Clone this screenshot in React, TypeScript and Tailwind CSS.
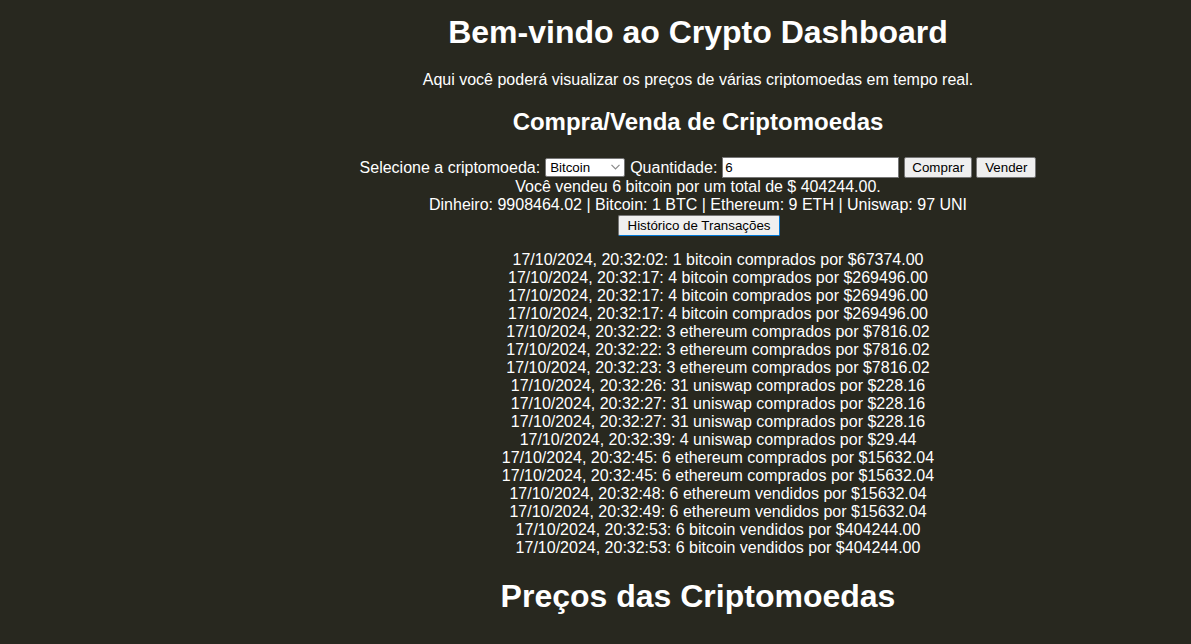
import { useState } from 'react';

const historico = [
  '17/10/2024, 20:32:02: 1 bitcoin comprados por $67374.00',
  '17/10/2024, 20:32:17: 4 bitcoin comprados por $269496.00',
  '17/10/2024, 20:32:17: 4 bitcoin comprados por $269496.00',
  '17/10/2024, 20:32:17: 4 bitcoin comprados por $269496.00',
  '17/10/2024, 20:32:22: 3 ethereum comprados por $7816.02',
  '17/10/2024, 20:32:22: 3 ethereum comprados por $7816.02',
  '17/10/2024, 20:32:23: 3 ethereum comprados por $7816.02',
  '17/10/2024, 20:32:26: 31 uniswap comprados por $228.16',
  '17/10/2024, 20:32:27: 31 uniswap comprados por $228.16',
  '17/10/2024, 20:32:27: 31 uniswap comprados por $228.16',
  '17/10/2024, 20:32:39: 4 uniswap comprados por $29.44',
  '17/10/2024, 20:32:45: 6 ethereum comprados por $15632.04',
  '17/10/2024, 20:32:45: 6 ethereum comprados por $15632.04',
  '17/10/2024, 20:32:48: 6 ethereum vendidos por $15632.04',
  '17/10/2024, 20:32:49: 6 ethereum vendidos por $15632.04',
  '17/10/2024, 20:32:53: 6 bitcoin vendidos por $404244.00',
  '17/10/2024, 20:32:53: 6 bitcoin vendidos por $404244.00',
];

export default function App() {
  const [moeda, setMoeda] = useState('bitcoin');
  const [qtd, setQtd] = useState('6');

  return (
    <div className="min-h-[644px] bg-[#28281f] text-white font-['Liberation_Sans',Arial,sans-serif] flex">
      {/* espaço lateral */}
      <div className="w-[205px] shrink-0" />

      <main className="flex-1 text-center">
        <h1 className="text-[32px] leading-[37px] font-bold mt-[14px]">Bem-vindo ao Crypto Dashboard</h1>
        <p className="text-base leading-[18px] mt-[20px]">
          Aqui você poderá visualizar os preços de várias criptomoedas em tempo real.
        </p>

        <h2 className="text-2xl leading-[27px] font-bold mt-[19px]">Compra/Venda de Criptomoedas</h2>

        <div className="mt-[22px] flex items-center justify-center text-base leading-[18px]">
          <label>Selecione a criptomoeda:</label>
          <div className="relative ml-[5px]">
            <select
              value={moeda}
              onChange={(e) => setMoeda(e.target.value)}
              className="appearance-none block w-[80px] h-[19px] bg-white text-black text-[13.33px] leading-[17px] border border-[#767676] rounded-[2px] pl-[4px] text-left"
            >
              <option value="bitcoin">Bitcoin</option>
              <option value="ethereum">Ethereum</option>
              <option value="uniswap">Uniswap</option>
            </select>
            <svg
              className="absolute right-[5px] top-[6px] w-[9px] h-[6px] pointer-events-none"
              viewBox="0 0 9 6"
              fill="none"
              stroke="#8a8a8a"
              strokeWidth={1.2}
            >
              <path d="M0.5 0.8 L4.5 4.8 L8.5 0.8" />
            </svg>
          </div>
          <label className="ml-[5px]">Quantidade:</label>
          <input
            value={qtd}
            onChange={(e) => setQtd(e.target.value)}
            className="ml-[5px] w-[177px] h-[21px] bg-white text-black text-[13.33px] border border-[#767676] px-[2px] text-left"
          />
          <button className="ml-[5px] h-[21px] px-[7px] bg-[#efefef] text-black text-[13.33px] border border-[#767676] rounded-[2px] leading-none">
            Comprar
          </button>
          <button className="ml-[4px] h-[21px] px-[8px] bg-[#efefef] text-black text-[13.33px] border border-[#767676] rounded-[2px] leading-none">
            Vender
          </button>
        </div>

        <p className="text-base leading-[18px]">Você vendeu 6 bitcoin por um total de $ 404244.00.</p>
        <p className="text-base leading-[18px]">
          Dinheiro: 9908464.02 | Bitcoin: 1 BTC | Ethereum: 9 ETH | Uniswap: 97 UNI
        </p>
        <div className="flex justify-center pl-[2px]">
          <button className="mt-[1px] h-[21px] px-[9px] bg-[#efefef] text-black text-[13.33px] leading-none border border-[#767676] border-r-[#0078d7] border-b-[#0078d7] rounded-[2px]">
            Histórico de Transações
          </button>
        </div>

        <ul className="mt-[15px] pl-[40px] text-base leading-[18px]">
          {historico.map((linha, i) => (
            <li key={i}>{linha}</li>
          ))}
        </ul>

        <h1 className="text-[32px] leading-[37px] font-bold mt-[21px]">Preços das Criptomoedas</h1>
      </main>
    </div>
  );
}
